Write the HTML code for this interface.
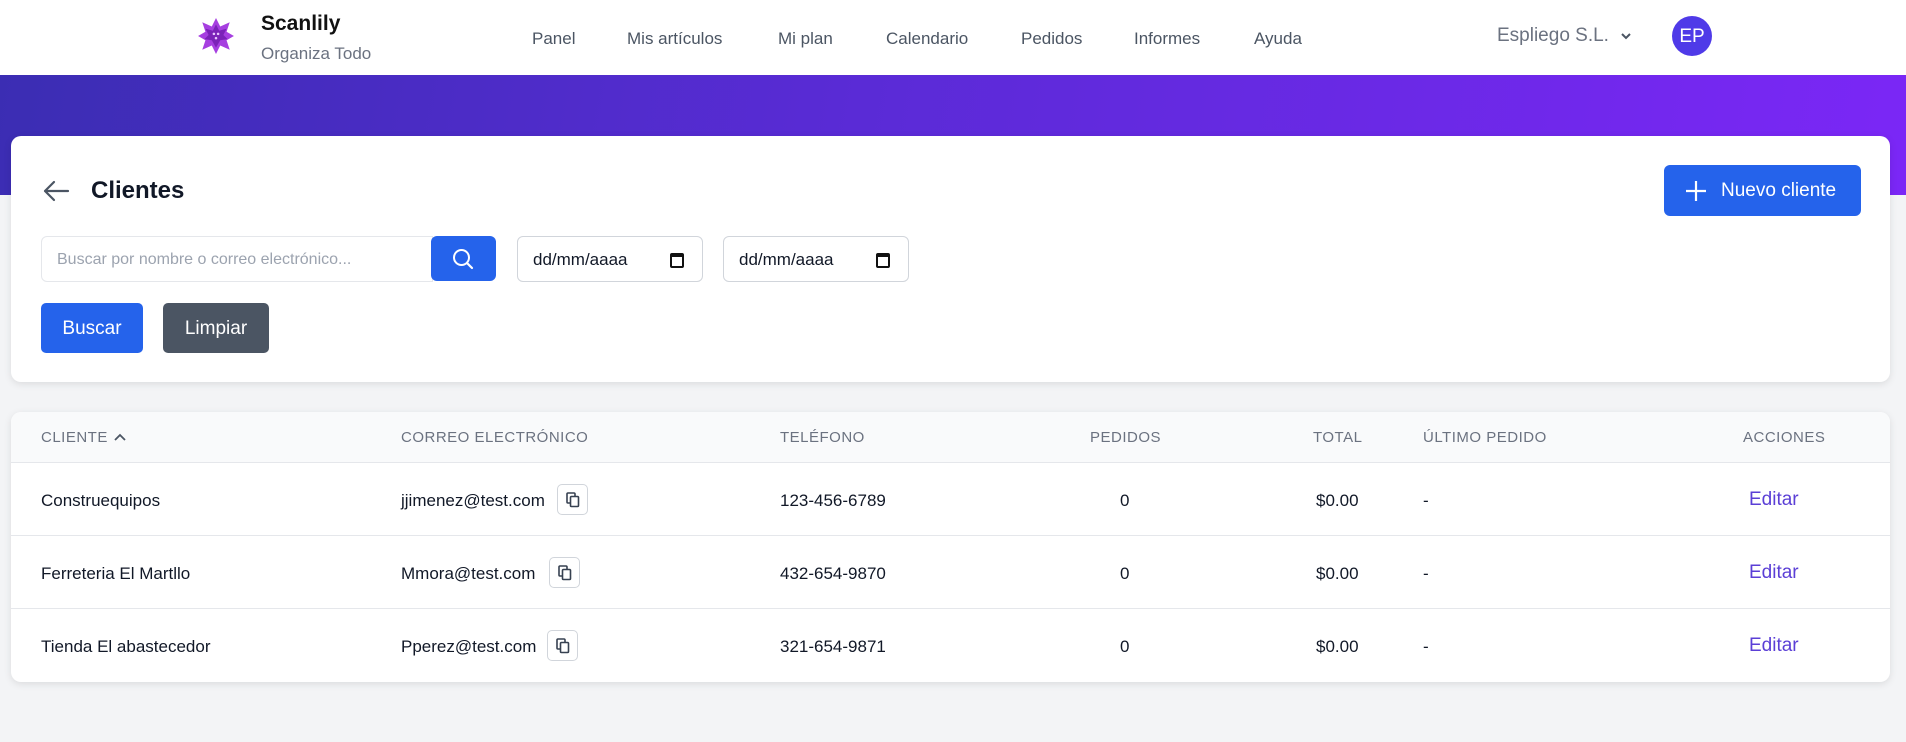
<!DOCTYPE html>
<html><head><meta charset="utf-8"><style>
*{box-sizing:border-box;margin:0;padding:0}
body{width:1906px;height:742px;background:#f3f4f6;font-family:"Liberation Sans",sans-serif;position:relative;overflow:hidden;color:#111827}
.abs{position:absolute}
.hdr{left:0;top:0;width:1906px;height:75px;background:#fff}
.grad{left:0;top:75px;width:1906px;height:120px;background:linear-gradient(100deg,#3b2db3 0%,#5a2bd6 45%,#7b27f6 100%)}
.nav{top:29px;font-size:17px;color:#4b5563}
.card{background:#fff;border-radius:10px;box-shadow:0 2px 8px rgba(0,0,0,.1)}
.th{top:429px;font-size:15px;color:#6b7280;letter-spacing:.5px}
.td{font-size:17px;color:#111827}
.copy{width:31px;height:31px;border:1px solid #d1d5db;border-radius:5px;background:#fff}
.ed{color:#5b3fd6;font-size:19px}
</style></head><body>
<div class="abs hdr"></div>
<svg class="abs" style="left:197px;top:17px" width="38" height="38" viewBox="0 0 36 36">
<polygon points="18,1 22,9 31,5 28,14 35,18 28,22 31,31 22,27 18,35 14,27 5,31 8,22 1,18 8,14 5,5 14,9" fill="#a63fe0"/>
<polygon points="18,7 21,13 28,11 25,17 29,21 22,22 18,29 14,22 7,21 11,17 8,11 15,13" fill="#7b22b8"/>
<circle cx="16" cy="16" r="1.2" fill="#e9c5ff"/><circle cx="20" cy="16" r="1.2" fill="#e9c5ff"/><circle cx="18" cy="20" r="1.2" fill="#e9c5ff"/></svg>
<div class="abs" style="left:261px;top:12px;font-size:21px;font-weight:bold;color:#111">Scanlily</div>
<div class="abs" style="left:261px;top:44px;font-size:17px;color:#6b7280">Organiza Todo</div>
<div class="abs nav" style="left:532px">Panel</div>
<div class="abs nav" style="left:627px">Mis artículos</div>
<div class="abs nav" style="left:778px">Mi plan</div>
<div class="abs nav" style="left:886px">Calendario</div>
<div class="abs nav" style="left:1021px">Pedidos</div>
<div class="abs nav" style="left:1134px">Informes</div>
<div class="abs nav" style="left:1254px">Ayuda</div>
<div class="abs" style="left:1497px;top:25px;font-size:19px;color:#6b7280">Espliego S.L.</div>
<svg class="abs" style="left:1620px;top:31px" width="12" height="10"><path d="M2 3l4 4 4-4" stroke="#4b5563" stroke-width="2" fill="none"/></svg>
<div class="abs" style="left:1672px;top:16px;width:40px;height:40px;border-radius:50%;background:#4f3ae8;color:#fff;font-size:19px;text-align:center;line-height:42px">EP</div>
<div class="abs grad"></div>

<div class="abs card" style="left:11px;top:136px;width:1879px;height:246px"></div>
<svg class="abs" style="left:42px;top:179px" width="28" height="24" viewBox="0 0 28 24"><path d="M26 12H3M12 3L3 12l9 9" stroke="#4b5563" stroke-width="2.2" fill="none" stroke-linecap="round" stroke-linejoin="round"/></svg>
<div class="abs" style="left:91px;top:177px;font-size:24px;font-weight:bold;color:#111827">Clientes</div>
<div class="abs" style="left:1664px;top:165px;width:197px;height:51px;background:#2563eb;border-radius:6px;color:#fff;font-size:19px;line-height:52px;padding-left:57px">Nuevo cliente</div>
<svg class="abs" style="left:1685px;top:180px" width="22" height="22"><path d="M11 1v20M1 11h20" stroke="#fff" stroke-width="2.2"/></svg>
<div class="abs" style="left:41px;top:236px;width:392px;height:46px;border:1px solid #e5e7eb;border-radius:6px 0 0 6px;font-size:16px;color:#9ca3af;line-height:45px;padding-left:15px">Buscar por nombre o correo electrónico...</div>
<div class="abs" style="left:431px;top:236px;width:65px;height:45px;background:#2563eb;border-radius:6px"></div>
<svg class="abs" style="left:451px;top:247px" width="24" height="24"><circle cx="10.5" cy="10.5" r="7.5" stroke="#fff" stroke-width="2" fill="none"/><path d="M16 16l5 5" stroke="#fff" stroke-width="2.2" stroke-linecap="round"/></svg>
<div class="abs" style="left:517px;top:236px;width:186px;height:46px;border:1px solid #d1d5db;border-radius:6px;font-size:17px;line-height:46px;padding-left:15px">dd/mm/aaaa</div>
<div class="abs" style="left:723px;top:236px;width:186px;height:46px;border:1px solid #d1d5db;border-radius:6px;font-size:17px;line-height:46px;padding-left:15px">dd/mm/aaaa</div>
<svg class="abs" style="left:669px;top:251px" width="16" height="18"><rect x="2" y="3" width="12" height="13" rx="1" stroke="#111" stroke-width="2" fill="none"/><rect x="2" y="3" width="12" height="3" fill="#111"/></svg>
<svg class="abs" style="left:875px;top:251px" width="16" height="18"><rect x="2" y="3" width="12" height="13" rx="1" stroke="#111" stroke-width="2" fill="none"/><rect x="2" y="3" width="12" height="3" fill="#111"/></svg>
<div class="abs" style="left:41px;top:303px;width:102px;height:50px;background:#2563eb;border-radius:5px;color:#fff;font-size:19px;text-align:center;line-height:52px">Buscar</div>
<div class="abs" style="left:163px;top:303px;width:106px;height:50px;background:#4b5563;border-radius:5px;color:#fff;font-size:19px;text-align:center;line-height:52px">Limpiar</div>

<div class="abs card" style="left:11px;top:412px;width:1879px;height:270px;overflow:hidden">
<div style="height:51px;background:#f9fafb;border-bottom:1px solid #e5e7eb"></div>
<div style="height:73px;border-bottom:1px solid #e5e7eb"></div>
<div style="height:73px;border-bottom:1px solid #e5e7eb"></div>
</div>
<div class="abs th" style="left:41px">CLIENTE</div>
<svg class="abs" style="left:113px;top:432px" width="14" height="10"><path d="M2 8l5-5 5 5" stroke="#4b5563" stroke-width="1.8" fill="none"/></svg>
<div class="abs th" style="left:401px">CORREO ELECTRÓNICO</div>
<div class="abs th" style="left:780px">TELÉFONO</div>
<div class="abs th" style="left:1090px">PEDIDOS</div>
<div class="abs th" style="left:1313px">TOTAL</div>
<div class="abs th" style="left:1423px">ÚLTIMO PEDIDO</div>
<div class="abs th" style="left:1743px">ACCIONES</div>

<div class="abs td" style="left:41px;top:491px">Construequipos</div>
<div class="abs td" style="left:401px;top:491px">jjimenez@test.com</div>
<div class="abs copy" style="left:557px;top:484px"></div>
<div class="abs td" style="left:780px;top:491px">123-456-6789</div>
<div class="abs td" style="left:1120px;top:491px">0</div>
<div class="abs td" style="left:1316px;top:491px">$0.00</div>
<div class="abs td" style="left:1423px;top:491px">-</div>
<div class="abs ed" style="left:1749px;top:489px">Editar</div>

<div class="abs td" style="left:41px;top:564px">Ferreteria El Martllo</div>
<div class="abs td" style="left:401px;top:564px">Mmora@test.com</div>
<div class="abs copy" style="left:549px;top:557px"></div>
<div class="abs td" style="left:780px;top:564px">432-654-9870</div>
<div class="abs td" style="left:1120px;top:564px">0</div>
<div class="abs td" style="left:1316px;top:564px">$0.00</div>
<div class="abs td" style="left:1423px;top:564px">-</div>
<div class="abs ed" style="left:1749px;top:562px">Editar</div>

<div class="abs td" style="left:41px;top:637px">Tienda El abastecedor</div>
<div class="abs td" style="left:401px;top:637px">Pperez@test.com</div>
<div class="abs copy" style="left:547px;top:630px"></div>
<div class="abs td" style="left:780px;top:637px">321-654-9871</div>
<div class="abs td" style="left:1120px;top:637px">0</div>
<div class="abs td" style="left:1316px;top:637px">$0.00</div>
<div class="abs td" style="left:1423px;top:637px">-</div>
<div class="abs ed" style="left:1749px;top:635px">Editar</div>

<svg class="abs" style="left:566px;top:492px" width="14" height="16"><rect x="1" y="1" width="8" height="10" rx="1" stroke="#374151" stroke-width="1.6" fill="none"/><rect x="4.5" y="4.5" width="8" height="10" rx="1" stroke="#374151" stroke-width="1.6" fill="#fff"/></svg>
<svg class="abs" style="left:558px;top:565px" width="14" height="16"><rect x="1" y="1" width="8" height="10" rx="1" stroke="#374151" stroke-width="1.6" fill="none"/><rect x="4.5" y="4.5" width="8" height="10" rx="1" stroke="#374151" stroke-width="1.6" fill="#fff"/></svg>
<svg class="abs" style="left:556px;top:638px" width="14" height="16"><rect x="1" y="1" width="8" height="10" rx="1" stroke="#374151" stroke-width="1.6" fill="none"/><rect x="4.5" y="4.5" width="8" height="10" rx="1" stroke="#374151" stroke-width="1.6" fill="#fff"/></svg>
</body></html>
